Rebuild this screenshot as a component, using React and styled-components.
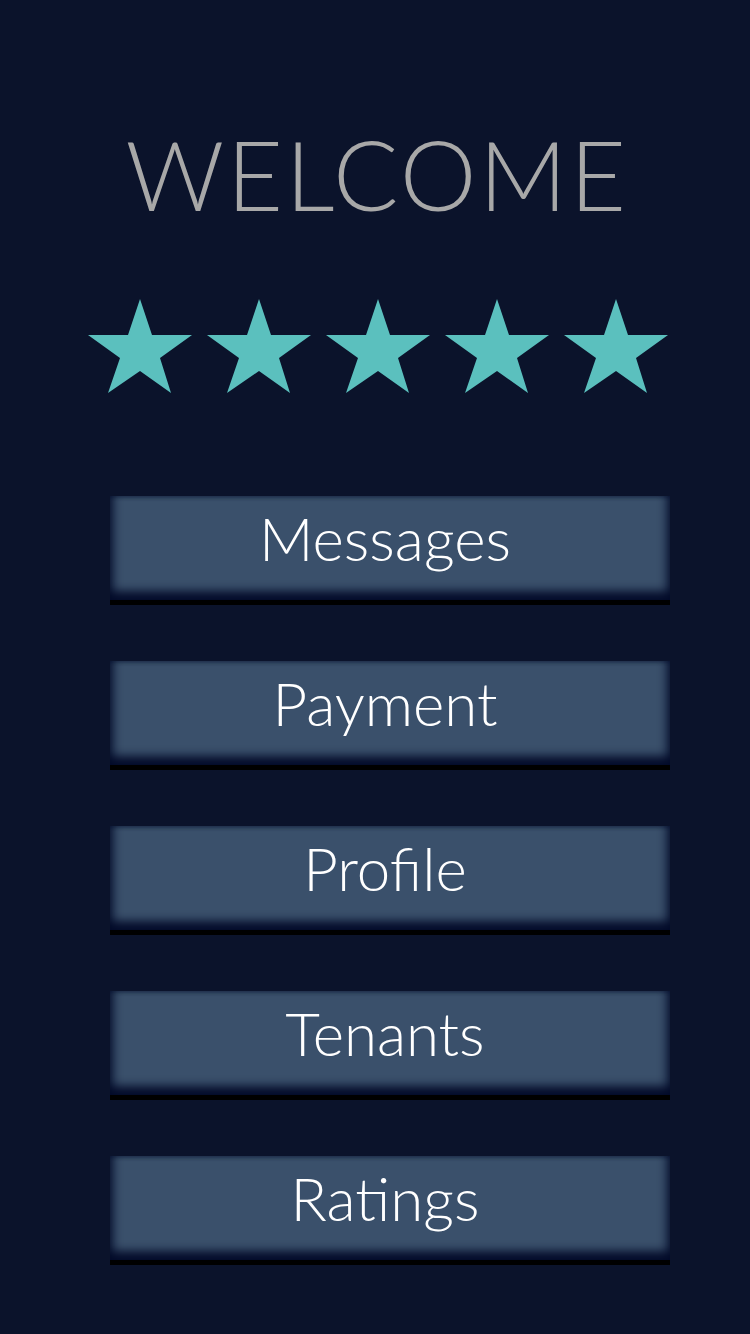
import React from "react";
import styled, { createGlobalStyle } from "styled-components";

const GlobalStyle = createGlobalStyle`
  html, body {
    margin: 0;
    padding: 0;
    background: #0b132b;
  }
  body {
    font-family: Lato, "Open Sans", sans-serif;
  }
`;

const Page = styled.div`
  min-height: 1334px;
  background: #0b132b;
  display: flex;
  flex-direction: column;
  padding-top: 116px;
  box-sizing: border-box;
`;

const Title = styled.h1`
  margin: 0;
  text-align: center;
  font-family: Lato, sans-serif;
  font-weight: 300;
  font-size: 97px;
  line-height: 1.2;
  color: #a8a8a8;
  letter-spacing: 2.5px;
  padding-left: 4px;
`;

const Stars = styled.div`
  display: flex;
  justify-content: center;
  gap: 15px;
  margin-top: 67px;
  padding-left: 6px;
`;

const StarIcon = styled.svg`
  width: 104px;
  height: 94px;
  display: block;
  fill: #5bc0be;
`;

const Menu = styled.nav`
  display: flex;
  flex-direction: column;
  gap: 56px;
  margin-top: 103px;
  padding-left: 110px;
`;

const MenuButton = styled.button`
  width: 560px;
  height: 109px;
  box-sizing: border-box;
  padding: 7px 10px 0 0;
  border: none;
  border-bottom: 5px solid #000;
  background: #3a506b;
  box-shadow:
    inset 0 -14px 10px -5px rgba(2, 10, 40, 0.95),
    inset 9px 0 8px -5px rgba(5, 15, 45, 0.8),
    inset -9px 0 8px -5px rgba(5, 15, 45, 0.8),
    inset 0 3px 4px -2px rgba(5, 15, 45, 0.5);
  color: #ffffff;
  font-family: Lato, sans-serif;
  font-weight: 300;
  font-size: 60px;
  line-height: 70px;
  text-align: center;
  display: flex;
  justify-content: center;
  align-items: flex-start;
  cursor: pointer;
`;

const Star = () => (
  <StarIcon viewBox="0 0 104 94">
    <polygon points="52,0 64,36 104,36 72,59 83,94 52,72 20,94 32,59 0,36 40,36" />
  </StarIcon>
);

const items = ["Messages", "Payment", "Profile", "Tenants", "Ratings"];

const App = () => {
  return (
    <Page>
      <GlobalStyle />
      <Title>WELCOME</Title>
      <Stars>
        {[0, 1, 2, 3, 4].map((i) => (
          <Star key={i} />
        ))}
      </Stars>
      <Menu>
        {items.map((label) => (
          <MenuButton key={label}>{label}</MenuButton>
        ))}
      </Menu>
    </Page>
  );
};

export default App;
